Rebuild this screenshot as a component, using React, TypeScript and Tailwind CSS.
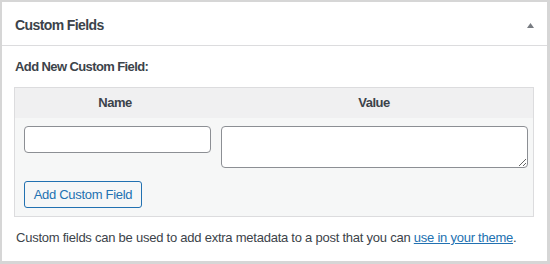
export default function App() {
  return (
    <div
      className="w-[550px] h-[264px] bg-white border-t-2 border-l-2 border-r-[3px] border-b-[3px] border-[#d6d6d6] text-[#1d2327]"
      style={{ fontFamily: '"Liberation Sans", Arial, sans-serif' }}
    >
      {/* header */}
      <div className="h-[44px] flex items-center justify-between pt-[3px] pl-[13px] pr-[13px] border-b border-[#dcdcde]">
        <h2 className="text-[14px] font-bold tracking-[-0.6px] text-[#3c434a]">Custom Fields</h2>
        <svg width="7" height="5" viewBox="0 0 7 5">
          <path d="M3.5 0 L7 5 L0 5 Z" fill="#787c82" />
        </svg>
      </div>

      <div className="px-[12px] pt-[12px]">
        <p className="text-[13px] font-bold tracking-[-0.6px] text-[#3c434a] pl-[1px] leading-[18px]">
          Add New Custom Field:
        </p>

        <div className="mt-[11px] w-[520px] border border-[#dcdcde] bg-[#f6f7f7]">
          <div className="grid grid-cols-[200px_1fr] h-[30px] bg-[#f0f0f1] items-center text-[13px] font-bold tracking-[-0.5px] text-[#3c434a]">
            <span className="text-center">Name</span>
            <span className="text-center">Value</span>
          </div>
          <div className="flex items-start gap-[10px] pl-[9px] pt-[8px]">
            <input className="w-[187px] h-[27px] bg-white border border-[#8c8f94] rounded-[4px]" />
            <textarea className="w-[307px] h-[42px] bg-white border border-[#8c8f94] rounded-[4px] resize-y" />
          </div>
          <div className="pl-[9px] pt-[13px] pb-[8px]">
            <button className="h-[27px] w-[118px] border border-[#2271b1] rounded-[3px] bg-[#f6f7f7] text-[#2271b1] text-[13px] tracking-[-0.3px]">
              Add Custom Field
            </button>
          </div>
        </div>

        <p className="mt-[12px] text-[13px] tracking-[-0.24px] text-[#3c434a] pl-[2px] leading-[18px] whitespace-nowrap">
          Custom fields can be used to add extra metadata to a post that you can{" "}
          <a href="#" className="text-[#2271b1] underline">use in your theme</a>.
        </p>
      </div>
    </div>
  );
}
